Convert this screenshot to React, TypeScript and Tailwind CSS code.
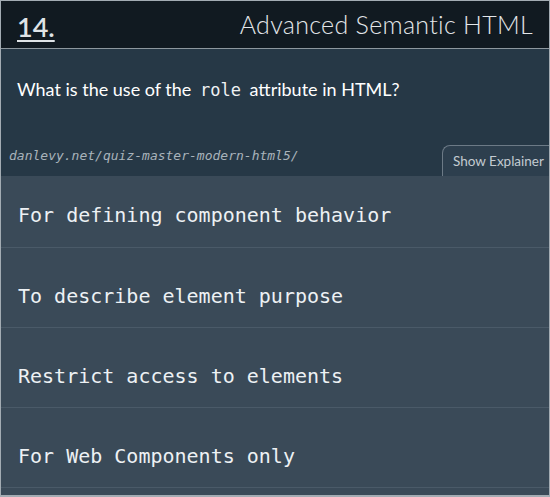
import React from "react";

const options = [
  "For defining component behavior",
  "To describe element purpose",
  "Restrict access to elements",
  "For Web Components only",
];

const App = () => {
  return (
    <div className="w-[550px] h-[497px] overflow-hidden border border-b-2 border-[#a3acb3] bg-[#3a4a58] flex flex-col font-['Lato',sans-serif]">
      <div className="h-[48px] shrink-0 bg-[#111a21] border-b border-[#8d979e] flex items-center justify-between pl-[16px] pr-[16px]">
        <span className="text-[27px] leading-none font-semibold text-[#dfe3e6] underline underline-offset-[3px] decoration-2 mt-[4px]">14.</span>
        <span className="text-[25px] font-light text-[#e4e7ea] tracking-[0.3px]">Advanced Semantic HTML</span>
      </div>
      <div className="h-[127px] shrink-0 bg-[#263846] flex flex-col">
        <p className="pl-[16px] pt-[27px] text-[18px] text-white">
          What is the use of the{" "}
          <code className="mx-[4px] font-['DejaVu_Sans_Mono',monospace] text-[17px] text-[#eef1f3]">role</code>{" "}
          attribute in HTML?
        </p>
        <div className="mt-auto flex items-end justify-between">
          <span className="pl-[8px] pb-[11px] italic text-[13px] text-[#a9b3bb] font-['DejaVu_Sans_Mono',monospace]">
            danlevy.net/quiz-master-modern-html5/
          </span>
          <button className="h-[31px] w-[107px] rounded-tl-[8px] border-t border-l border-[#6c7a86] bg-[#2d3f4e] text-[13.5px] text-[#c3cbd1] pl-[10px] text-left">
            Show Explainer
          </button>
        </div>
      </div>
      <div className="flex flex-col font-['DejaVu_Sans_Mono',monospace] text-[20px] text-[#edf1f4]">
        {options.map((opt, i) => (
          <div
            key={opt}
            className={`border-b border-[#4a5a68] pl-[17px] ${i === 0 ? "h-[72px] pt-[24px]" : "h-[80px] pt-[33px]"}`}
          >
            {opt}
          </div>
        ))}
      </div>
    </div>
  );
};

export default App;
